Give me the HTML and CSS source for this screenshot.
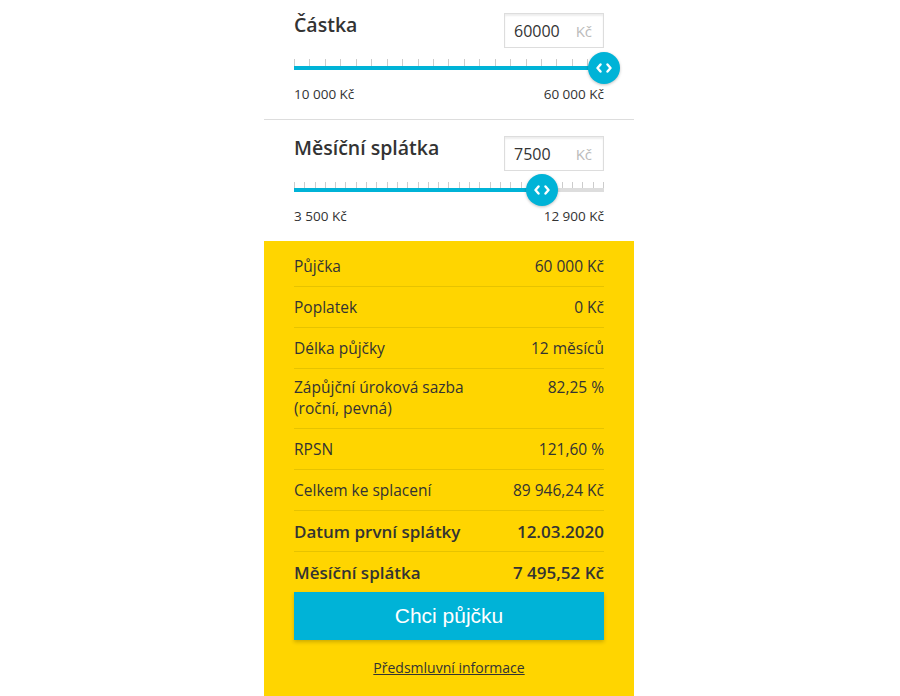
FILE: index.html
```html
<!DOCTYPE html>
<html lang="cs">
<head>
  <meta charset="UTF-8" />
  <meta name="viewport" content="width=device-width,initial-scale=1.0" />
  <title>Kalkulačka půjčky</title>
  <link rel="stylesheet" href="styles.css">
</head>
<body>
  <div class="calc">
    <!-- Amount slider -->
    <section class="slider-block">
      <div class="slider-head">
        <h2 class="slider-title">Částka</h2>
        <div class="amount-input">
          <span class="amount-value">60000</span>
          <span class="amount-unit">Kč</span>
        </div>
      </div>
      <div class="range">
        <div class="range-ticks">
          <span></span><span></span><span></span><span></span><span></span><span></span><span></span>
          <span></span><span></span><span></span><span></span><span></span><span></span><span></span>
          <span></span><span></span><span></span><span></span><span></span><span></span><span></span>
        </div>
        <div class="range-track">
          <div class="range-fill" style="width:100%"></div>
          <div class="range-handle" style="left:100%">
            <svg width="16" height="10" viewBox="0 0 16 10"><path d="M4.5 1.5L1.5 5l3 3.5M11.5 1.5l3 3.5-3 3.5" fill="none" stroke="#fff" stroke-width="2.4" stroke-linecap="round" stroke-linejoin="round"/></svg>
          </div>
        </div>
      </div>
      <div class="range-limits"><span>10 000 Kč</span><span>60 000 Kč</span></div>
    </section>

    <!-- Monthly payment slider -->
    <section class="slider-block slider-block-second">
      <div class="slider-head">
        <h2 class="slider-title">Měsíční splátka</h2>
        <div class="amount-input">
          <span class="amount-value">7500</span>
          <span class="amount-unit">Kč</span>
        </div>
      </div>
      <div class="range">
        <div class="range-ticks range-ticks-fine">
          <span></span><span></span><span></span><span></span><span></span><span></span><span></span><span></span>
          <span></span><span></span><span></span><span></span><span></span><span></span><span></span><span></span>
          <span></span><span></span><span></span><span></span><span></span><span></span><span></span><span></span>
          <span></span><span></span><span></span><span></span><span></span><span></span><span></span>
        </div>
        <div class="range-track">
          <div class="range-fill" style="width:80%"></div>
          <div class="range-handle" style="left:80%">
            <svg width="16" height="10" viewBox="0 0 16 10"><path d="M4.5 1.5L1.5 5l3 3.5M11.5 1.5l3 3.5-3 3.5" fill="none" stroke="#fff" stroke-width="2.4" stroke-linecap="round" stroke-linejoin="round"/></svg>
          </div>
        </div>
      </div>
      <div class="range-limits"><span>3 500 Kč</span><span>12 900 Kč</span></div>
    </section>

    <!-- Loan summary -->
    <section class="summary">
      <div class="summary-row"><span>Půjčka</span><span>60 000 Kč</span></div>
      <div class="summary-row"><span>Poplatek</span><span>0 Kč</span></div>
      <div class="summary-row"><span>Délka půjčky</span><span>12 měsíců</span></div>
      <div class="summary-row summary-row-tall"><span>Zápůjční úroková sazba<br>(roční, pevná)</span><span>82,25 %</span></div>
      <div class="summary-row"><span>RPSN</span><span>121,60 %</span></div>
      <div class="summary-row"><span>Celkem ke splacení</span><span>89 946,24 Kč</span></div>
      <div class="summary-row summary-row-strong"><span>Datum první splátky</span><span>12.03.2020</span></div>
      <div class="summary-row summary-row-strong summary-row-last"><span>Měsíční splátka</span><span>7 495,52 Kč</span></div>
      <button class="cta">Chci půjčku</button>
      <a href="#" class="pre-contract">Předsmluvní informace</a>
    </section>
  </div>
</body>
</html>
```

FILE: styles.css
```css
html,body{margin:0;background:#fff}
body {
  font-family: "Open Sans", "Liberation Sans", sans-serif;
  color: #333;
  display: flex;
  justify-content: center;
  padding-right: 2px;
}
.calc {
  width: 370px;
  display: flex;
  flex-direction: column;
}

/* Slider blocks */
.slider-block {
  padding: 13px 30px 17px;
  border-bottom: 1px solid #ddd;
}
.slider-block-second {
  padding-top: 16px;
  border-bottom: none;
}
.slider-head {
  display: flex;
  justify-content: space-between;
  align-items: flex-start;
}
.slider-title {
  margin: 0;
  font-size: 19.5px;
  line-height: 24px;
  font-weight: 600;
  color: #333;
}
.amount-input {
  width: 100px;
  height: 35px;
  box-sizing: border-box;
  border: 1px solid #ddd;
  box-shadow: inset 0 2px 2px rgba(0,0,0,0.07);
  display: flex;
  align-items: center;
  justify-content: space-between;
  padding: 0 11px 0 9px;
}
.amount-value {
  font-size: 16px;
  color: #333;
}
.amount-unit {
  font-size: 15px;
  color: #bbb;
}

.range {
  margin-top: 11px;
}
.range-ticks {
  display: flex;
  justify-content: space-between;
  height: 7px;
  width: 310px;
}
.range-ticks-fine {
  height: 6px;
}
.range-ticks span {
  width: 1px;
  background: #ccc;
}
.range-track {
  position: relative;
  height: 4px;
  background: #ddd;
}
.range-fill {
  height: 100%;
  background: #00b3d7;
}
.range-handle {
  position: absolute;
  top: 50%;
  width: 32px;
  height: 32px;
  border-radius: 50%;
  background: #00b3d7;
  transform: translate(-50%, -50%);
  box-shadow: 0 1px 3px rgba(0,0,0,0.25);
  display: flex;
  align-items: center;
  justify-content: center;
}
.range-limits {
  display: flex;
  justify-content: space-between;
  margin-top: 16px;
  font-size: 13.5px;
  line-height: 16px;
  color: #333;
}

/* Summary */
.summary {
  background: #ffd500;
  padding: 5px 30px 19px;
  display: flex;
  flex-direction: column;
}
.summary-row {
  display: flex;
  justify-content: space-between;
  align-items: flex-start;
  padding: 10px 0 9px;
  border-bottom: 1px solid #e6c300;
  font-size: 15.5px;
  line-height: 21px;
}
.summary-row-tall {
  padding: 8px 0 9px;
}
.summary-row-strong {
  font-size: 17px;
  font-weight: 600;
}
.summary-row-last {
  border-bottom: none;
}
.cta {
  height: 48px;
  border: none;
  background: #00b3d7;
  color: #fff;
  font-family: "Liberation Sans", Arial, sans-serif;
  font-size: 21px;
  box-shadow: 0 2px 4px rgba(0,0,0,0.2);
  cursor: pointer;
}
.pre-contract {
  margin-top: 19px;
  align-self: center;
  font-size: 14px;
  line-height: 18px;
  color: #333;
}
```
